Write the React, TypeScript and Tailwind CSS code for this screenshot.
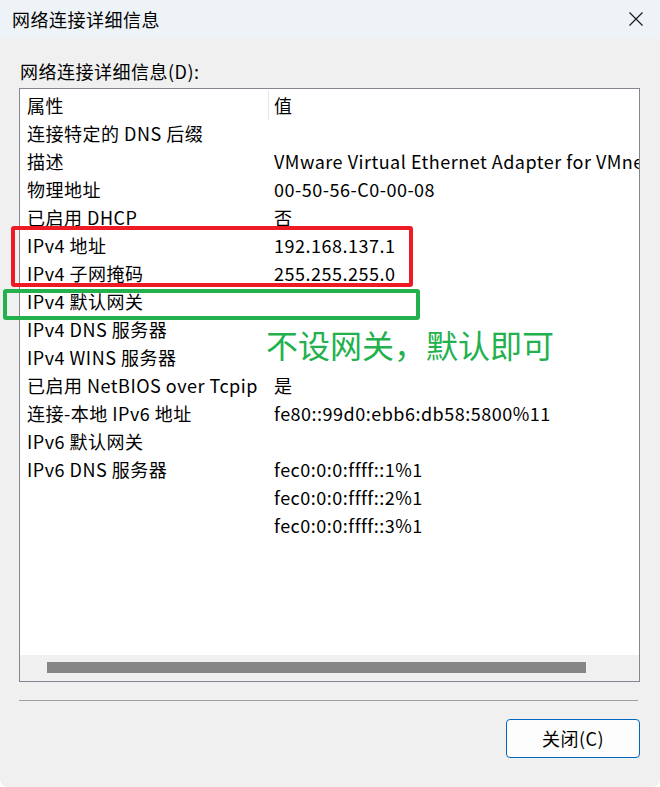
import React from 'react';

const rows: [string, string][] = [
  ['连接特定的 DNS 后缀', ''],
  ['描述', 'VMware Virtual Ethernet Adapter for VMnet8'],
  ['物理地址', '00-50-56-C0-00-08'],
  ['已启用 DHCP', '否'],
  ['IPv4 地址', '192.168.137.1'],
  ['IPv4 子网掩码', '255.255.255.0'],
  ['IPv4 默认网关', ''],
  ['IPv4 DNS 服务器', ''],
  ['IPv4 WINS 服务器', ''],
  ['已启用 NetBIOS over Tcpip', '是'],
  ['连接-本地 IPv6 地址', 'fe80::99d0:ebb6:db58:5800%11'],
  ['IPv6 默认网关', ''],
  ['IPv6 DNS 服务器', 'fec0:0:0:ffff::1%1'],
  ['', 'fec0:0:0:ffff::2%1'],
  ['', 'fec0:0:0:ffff::3%1'],
];

export default function App() {
  return (
    <div className="relative flex flex-col w-[660px] h-[787px] bg-[#f0f0f0] text-black overflow-hidden rounded-b-[8px] tracking-[0.5px] font-['Noto_Sans_CJK_SC','Noto_Sans',sans-serif]">
      {/* title bar */}
      <div className="flex items-center justify-between h-[37px] bg-[#eef3f8] pl-[12px] pr-[16px]">
        <span className="text-[18px] leading-none">网络连接详细信息</span>
        <svg width="16" height="16" viewBox="0 0 16 16" className="text-[#1a1a1a]">
          <path d="M1.5 1.5 L14.5 14.5 M14.5 1.5 L1.5 14.5" stroke="currentColor" strokeWidth="1.2" fill="none" />
        </svg>
      </div>

      <div className="flex flex-col px-[19px] pr-[20px]">
        <div className="mt-[22px] h-[24px] text-[18px] leading-[24px] pl-[1px]">网络连接详细信息(D):</div>

        {/* list box */}
        <div className="mt-[5px] flex flex-col h-[594px] border border-[#828790] bg-white">
          <div className="flex-1 flex flex-col pt-[2px] text-[18px] overflow-hidden">
            <div className="flex h-[28px] items-center">
              <div className="relative w-[254px] shrink-0 pl-[7px] h-full flex items-center">
                属性
                <div className="absolute right-[5px] top-0 h-[29px] w-px bg-[#e5e5e5]" />
              </div>
              <div>值</div>
            </div>
            {rows.map(([k, v], i) => (
              <div key={i} className="flex h-[28px] items-center whitespace-nowrap">
                <div className="w-[254px] shrink-0 pl-[7px]">{k}</div>
                <div className="overflow-hidden">{v}</div>
              </div>
            ))}
          </div>
          <div className="h-[26px] bg-[#f0f0f0] pt-[7px]">
            <div className="ml-[27px] w-[539px] h-[11px] bg-[#868686]" />
          </div>
        </div>

        <div className="mt-[18px] h-px bg-[#a0a0a0] mr-[2px]" />

        <div className="flex justify-end mt-[18px]">
          <button className="w-[134px] h-[39px] rounded-[4px] border border-[#0067c0] bg-[#fdfdfd] text-[18px]">
            关闭(C)
          </button>
        </div>
      </div>

      {/* annotations */}
      <div className="absolute left-[11px] top-[226px] w-[402px] h-[61px] border-[4px] border-[#ed1c24] rounded-[3px]" />
      <div className="absolute left-[3px] top-[289px] w-[417px] h-[31px] border-[4px] border-[#22b14c] rounded-[3px]" />
      <div className="absolute left-[266px] top-[324px] text-[32px] tracking-normal leading-[40px] text-[#22b14c] whitespace-nowrap">
        不设网关，默认即可
      </div>
    </div>
  );
}
